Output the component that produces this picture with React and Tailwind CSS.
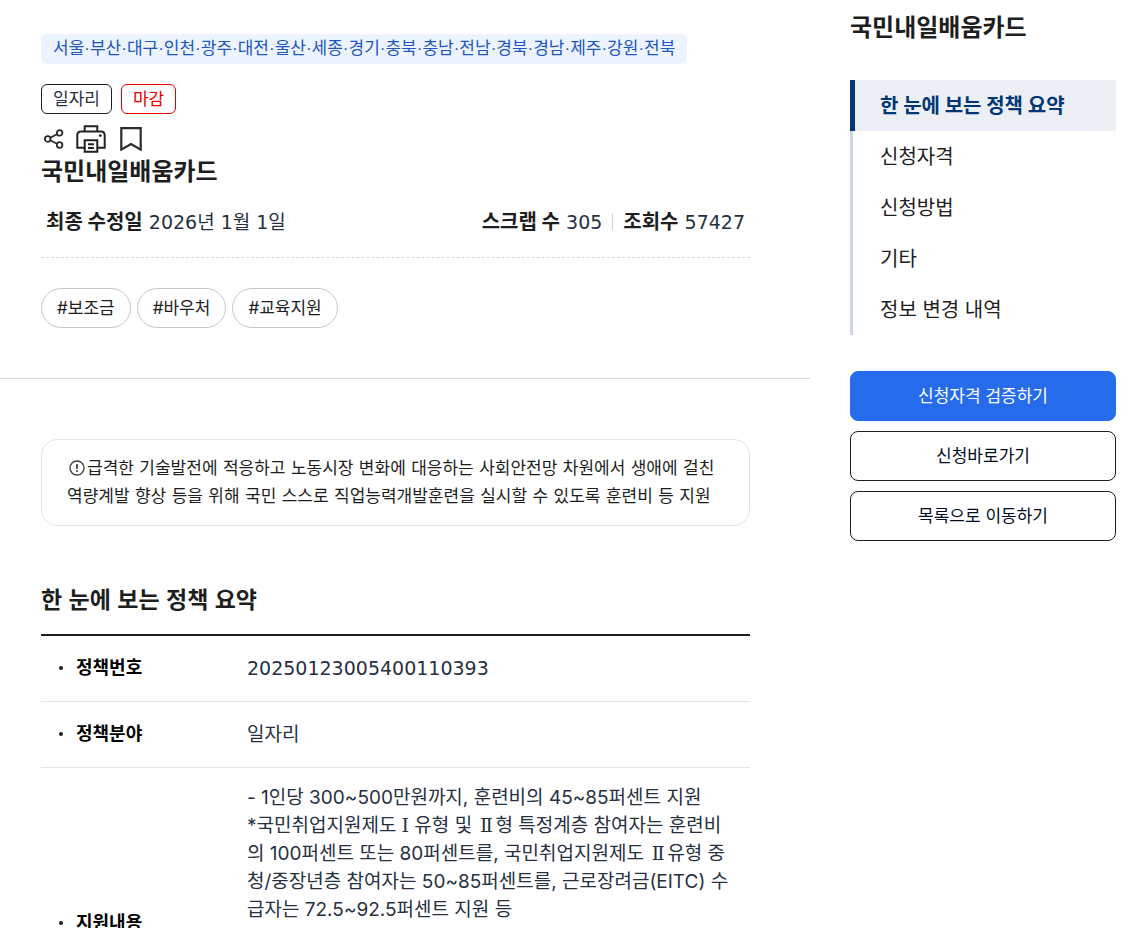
import React from "react";

function ShareIcon() {
  return (
    <svg width="20" height="20" viewBox="0 0 20 20" fill="none" stroke="#2b2b2b" strokeWidth="1.8" aria-hidden="true">
      <circle cx="3.7" cy="10" r="2.8" />
      <circle cx="15.6" cy="3.9" r="2.8" />
      <circle cx="15.6" cy="16" r="2.8" />
      <path d="M6.2 8.8 13 5.2M6.2 11.2 13 14.7" />
    </svg>
  );
}

function PrintIcon() {
  return (
    <svg width="30" height="28" viewBox="0 0 30 28" fill="none" stroke="#222" strokeWidth="2" aria-hidden="true">
      <path d="M8.7 6.5V1.2H21.3V6.5" />
      <path d="M8.5 22.8H1.3V10.2Q1.3 6.5 5 6.5H25Q28.7 6.5 28.7 10.2V22.8H21.5" />
      <path d="M8.7 15.2H21.3V26.8H8.7Z" />
      <path d="M12 19.3H18M12 23H18" />
      <circle cx="24.3" cy="10.6" r="1.4" fill="#222" stroke="none" />
    </svg>
  );
}

function BookmarkIcon() {
  return (
    <svg width="22" height="24" viewBox="0 0 22 24" fill="none" stroke="#2b2b2b" strokeWidth="2.2" aria-hidden="true">
      <path d="M1.3 1.2H20.7V22.6L11 17L1.3 22.6Z" />
    </svg>
  );
}

function NoticeIcon() {
  return (
    <svg className="mr-0.5 ml-0.5 inline-block align-[-2px]" width="16" height="16" viewBox="0 0 16 16" fill="none" stroke="#444" strokeWidth="1.4" aria-hidden="true">
      <circle cx="8" cy="8" r="7" />
      <path d="M8 4V9M8 10.3V12" strokeWidth="1.8" />
    </svg>
  );
}

const tags = ["#보조금", "#바우처", "#교육지원"];
const sections = ["한 눈에 보는 정책 요약", "신청자격", "신청방법", "기타", "정보 변경 내역"];

function Roman({ children }) {
  return <span className="inline-block w-[18px] text-center font-['DejaVu_Serif',serif] leading-none">{children}</span>;
}

function Key({ children }) {
  return (
    <strong className="font-['Inter','Noto_Sans_CJK_KR',sans-serif] text-[20px] leading-none text-[#1e1e1e]">
      {children}
    </strong>
  );
}

function Row({ label, children, tall }) {
  return (
    <tr className={tall ? "h-[312px] border-b border-[#e6e6e6]" : "h-[66px] border-b border-[#e6e6e6]"}>
      <th scope="row" className="w-[190px] text-left align-middle text-[18px] font-bold text-black">
        <span className="flex items-center pl-[18px]">
          <span className="mr-[13px] size-1 rounded-full bg-[#222]" />
          {label}
        </span>
      </th>
      <td
        className={
          tall
            ? "py-4 pl-4 align-top font-['Inter','Noto_Sans_CJK_KR',sans-serif] whitespace-nowrap"
            : "pl-4 align-middle"
        }
      >
        {children}
      </td>
    </tr>
  );
}

export default function App() {
  return (
    <div className="flex h-screen items-start overflow-hidden bg-white font-['DejaVu_Sans','Noto_Sans_CJK_KR',sans-serif] text-[17px] leading-7 text-[#1e1e1e]">
      <main className="min-w-0 flex-1">
        <header className="border-b border-[#d8d8d8] pt-[34px] pr-[60px] pb-[50px] pl-[41px]">
          <div className="flex">
            <span className="rounded-md bg-[#eef4ff] px-3 py-px font-['Liberation_Sans','Noto_Sans_CJK_KR',sans-serif] whitespace-nowrap text-[#1d56bc]">
              서울·부산·대구·인천·광주·대전·울산·세종·경기·충북·충남·전남·경북·경남·제주·강원·전북
            </span>
          </div>
          <div className="mt-5 flex gap-[9px]">
            <span className="rounded-md border border-[#1e1e1e] px-[11px] text-[#27303f]">일자리</span>
            <span className="rounded-md border border-[#e60000] px-[11px] text-[#e60000]">마감</span>
          </div>
          <div className="mt-2 flex h-[34px] items-center pl-[3px]">
            <button type="button" aria-label="공유" className="mr-3"><ShareIcon /></button>
            <button type="button" aria-label="인쇄" className="mr-3.5"><PrintIcon /></button>
            <button type="button" aria-label="스크랩"><BookmarkIcon /></button>
          </div>
          <h1 className="text-[24px] leading-8 font-bold">국민내일배움카드</h1>
          <div className="mt-5 flex justify-between border-b border-dashed border-[#d8d8d8] px-[5px] pb-[21px] text-[19px] text-[#27303f]">
            <p><Key>최종 수정일</Key> 2026년 1월 1일</p>
            <p className="flex items-center">
              <span><Key>스크랩 수</Key> 305</span>
              <span className="mx-2.5 h-4 w-px bg-[#cdd1d5]" />
              <span><Key>조회수</Key> 57427</span>
            </p>
          </div>
          <ul className="mt-[30px] flex gap-1.5 font-['Inter','Noto_Sans_CJK_KR',sans-serif]">
            {tags.map((t) => (
              <li key={t}>
                <a href="#tag" className="block rounded-full border border-[#c6c6c6] px-[15px] py-[5px]">{t}</a>
              </li>
            ))}
          </ul>
        </header>

        <div className="pt-[60px] pr-[60px] pl-[41px]">
          <p className="rounded-2xl border border-[#e4e4e4] px-[25px] pt-[14px] pb-[15px] whitespace-nowrap">
            <NoticeIcon />급격한 기술발전에 적응하고 노동시장 변화에 대응하는 사회안전망 차원에서 생애에 걸친
            <br />
            역량계발 향상 등을 위해 국민 스스로 직업능력개발훈련을 실시할 수 있도록 훈련비 등 지원
          </p>

          <h2 className="mt-[58px] mb-[18px] font-['Liberation_Sans','Noto_Sans_CJK_KR',sans-serif] text-[23px] leading-8 font-bold">
            한 눈에 보는 정책 요약
          </h2>
          <table className="w-full border-collapse border-t-2 border-[#1e1e1e] text-[19px] text-[#27303f]">
            <tbody>
              <Row label="정책번호">20250123005400110393</Row>
              <Row label="정책분야">일자리</Row>
              <Row label="지원내용" tall>
                - 1인당 300~500만원까지, 훈련비의 45~85퍼센트 지원
                <br />*국민취업지원제도<Roman>Ⅰ</Roman>유형 및 <Roman>Ⅱ</Roman>형 특정계층 참여자는 훈련비
                <br />의 100퍼센트 또는 80퍼센트를, 국민취업지원제도 <Roman>Ⅱ</Roman>유형 중
                <br />청/중장년층 참여자는 50~85퍼센트를, 근로장려금(EITC) 수
                <br />급자는 72.5~92.5퍼센트 지원 등
              </Row>
            </tbody>
          </table>
        </div>
      </main>

      <aside className="mr-[25px] ml-10 w-[266px] shrink-0 pt-3 font-['Inter','Noto_Sans_CJK_KR',sans-serif]">
        <h2 className="text-[24px] leading-8 font-bold">국민내일배움카드</h2>
        <nav aria-label="목차" className="mt-9 text-[20px]">
          <ul>
            {sections.map((s, i) => (
              <li key={s}>
                <a
                  href={"#section-" + i}
                  className={
                    i === 0
                      ? "block border-l-[5px] border-[#003675] bg-[#ecf0f5] pt-[13px] pb-[11px] pl-[25px] leading-[27px] font-bold text-[#003675]"
                      : "block border-l-[3px] border-[#cdd5e3] pt-[13px] pb-[11px] pl-[27px] leading-[27px]"
                  }
                >
                  {s}
                </a>
              </li>
            ))}
          </ul>
        </nav>
        <div className="mt-9 flex flex-col gap-2.5 text-[#000b1e]">
          <button type="button" className="rounded-lg border border-[#256bec] bg-[#256bec] py-2.5 text-white">신청자격 검증하기</button>
          <button type="button" className="rounded-lg border border-[#1e1e1e] py-2.5">신청바로가기</button>
          <button type="button" className="rounded-lg border border-[#1e1e1e] py-2.5">목록으로 이동하기</button>
        </div>
      </aside>
    </div>
  );
}
